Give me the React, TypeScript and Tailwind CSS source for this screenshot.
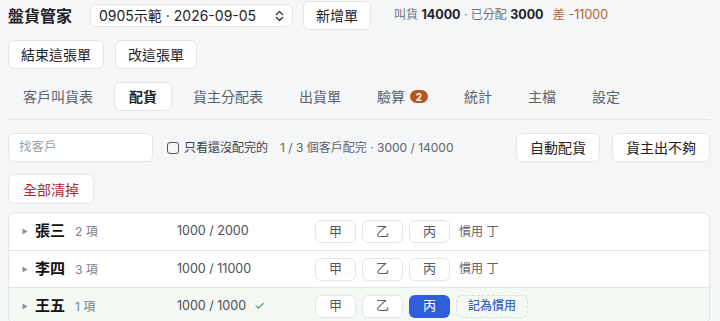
import React from "react";

const font = { fontFamily: '"Inter", "Noto Sans CJK TC", sans-serif' };

const tabs = ["客戶叫貨表", "配貨", "貨主分配表", "出貨單", "驗算", "統計", "主檔", "設定"];

type Row = {
  name: string;
  count: string;
  amount: string;
  done?: boolean;
  picked?: string;
  note?: string;
};

const rows: Row[] = [
  { name: "張三", count: "2 項", amount: "1000 / 2000", note: "慣用 丁" },
  { name: "李四", count: "3 項", amount: "1000 / 11000", note: "慣用 丁" },
  { name: "王五", count: "1 項", amount: "1000 / 1000", done: true, picked: "丙" },
];

function Btn({ children, className = "" }: { children: React.ReactNode; className?: string }) {
  return (
    <button
      className={`h-[29px] rounded-md border border-[#e3e5e9] bg-white text-[14px] text-[#1f2328] ${className}`}
    >
      {children}
    </button>
  );
}

function Triangle() {
  return (
    <svg width="6" height="7" viewBox="0 0 6 7">
      <path d="M0.5 0.5 L5.5 3.5 L0.5 6.5 Z" fill="#8a8f98" />
    </svg>
  );
}

export default function App() {
  return (
    <div style={font} className="h-[321px] w-[720px] overflow-hidden bg-[#f5f6f8] pl-2 pr-[10px] pt-[2px] text-[#1f2328]">
      {/* top bar */}
      <div className="flex h-[27px] items-center">
        <h1 className="text-[16px] font-bold text-[#1f2328]">盤貨管家</h1>
        <div className="ml-[18px] flex h-[23px] w-[203px] items-center justify-between rounded-md border border-[#e3e5e9] bg-white pl-2 pr-2 text-[14px]">
          <span>0905示範 · 2026-09-05</span>
          <svg width="9" height="12" viewBox="0 0 9 12" fill="none" stroke="#333" strokeWidth="1.4" strokeLinecap="round" strokeLinejoin="round">
            <path d="M1.5 4.5 L4.5 1.5 L7.5 4.5" />
            <path d="M1.5 7.5 L4.5 10.5 L7.5 7.5" />
          </svg>
        </div>
        <Btn className="ml-[10px] h-[27px] px-[12px]">新增單</Btn>
        <div className="ml-[23px] text-[12px] text-[#6b7078]">
          叫貨 <b className="text-[12.5px] font-bold text-[#1f2328]">14000</b> · 已分配{" "}
          <b className="text-[12.5px] font-bold text-[#1f2328]">3000</b>
          <span className="ml-[9px] text-[12.5px] text-[#b3622e]">差 -11000</span>
        </div>
      </div>

      <div className="mt-[11px] flex gap-[11px]">
        <Btn className="h-[28px] px-[12px]">結束這張單</Btn>
        <Btn className="h-[28px] px-[12px]">改這張單</Btn>
      </div>

      {/* tabs */}
      <div className="mt-[13px] flex items-center gap-[6px] border-b border-[#e3e5e9] pb-[8px]">
        {tabs.map((t) => (
          <div
            key={t}
            className={
              t === "配貨"
                ? "flex h-[29px] items-center rounded-md border border-[#e3e5e9] bg-white px-[14px] text-[14px] font-bold text-[#1f2328]"
                : "flex h-[29px] items-center border border-transparent px-[14px] text-[14px] text-[#5d636b]"
            }
          >
            {t}
            {t === "驗算" && (
              <span className="ml-[5px] flex h-[13px] w-[18px] items-center justify-center rounded-full bg-[#b5561f] text-[10px] font-bold leading-none text-white">
                2
              </span>
            )}
          </div>
        ))}
      </div>

      {/* search row */}
      <div className="mt-[13px] flex items-center">
        <div className="flex h-[29px] w-[145px] items-center rounded-md border border-[#e3e5e9] bg-white px-[10px] text-[12.5px] text-[#9a9fa6]">
          找客戶
        </div>
        <span className="ml-[14px] h-[12px] w-[12px] rounded-[3px] border-[1.5px] border-[#555]" />
        <span className="ml-[5px] text-[12px] text-[#3a3f45]">只看還沒配完的</span>
        <span className="ml-[12px] text-[12px] text-[#5d636b]">1 / 3 個客戶配完 · 3000 / 14000</span>
        <div className="ml-auto flex gap-[12px]">
          <Btn className="px-[13px]">自動配貨</Btn>
          <Btn className="px-[13px]">貨主出不夠</Btn>
        </div>
      </div>

      <div className="mt-[12px]">
        <Btn className="h-[30px] px-[14px] text-[#b3262b]">全部清掉</Btn>
      </div>

      {/* list */}
      <div className="mt-[8px] overflow-hidden rounded-lg border border-[#e3e5e9] bg-white">
        {rows.map((r, i) => (
          <div
            key={r.name}
            className={`flex h-[37px] items-center pl-[13px] ${i > 0 ? "border-t border-[#e3e5e9]" : ""} ${
              r.done ? "bg-[#f3f8f3]" : ""
            }`}
          >
            <span className="flex w-[13px] items-center">
              <Triangle />
            </span>
            <span className="flex w-[142px] items-baseline">
              <span className="text-[15px] font-bold text-[#111]">{r.name}</span>
              <span className="ml-[10px] text-[12px] text-[#7a7f87]">{r.count}</span>
            </span>
            <span className="flex w-[138px] items-center text-[12.5px] text-[#4a4f56]">
              {r.amount}
              {r.done && <span className="ml-[8px] text-[#4b9a5c]">✓</span>}
            </span>
            <div className="flex items-center gap-[6px]">
              {["甲", "乙", "丙"].map((s) =>
                r.picked === s ? (
                  <span
                    key={s}
                    className="flex h-[23px] w-[41px] items-center justify-center rounded-md bg-[#2f5fd8] text-[13px] text-white"
                  >
                    {s}
                  </span>
                ) : (
                  <span
                    key={s}
                    className="flex h-[23px] w-[41px] items-center justify-center rounded-md border border-[#e3e5e9] bg-white text-[13px] text-[#555a61]"
                  >
                    {s}
                  </span>
                )
              )}
              {r.note ? (
                <span className="ml-[3px] text-[12px] text-[#5d636b]">{r.note}</span>
              ) : (
                <span className="flex h-[23px] items-center rounded-md border border-dashed border-[#d6dbe6] px-[11px] text-[12px] font-medium text-[#3a5fc8]">
                  記為慣用
                </span>
              )}
            </div>
          </div>
        ))}
      </div>
    </div>
  );
}
